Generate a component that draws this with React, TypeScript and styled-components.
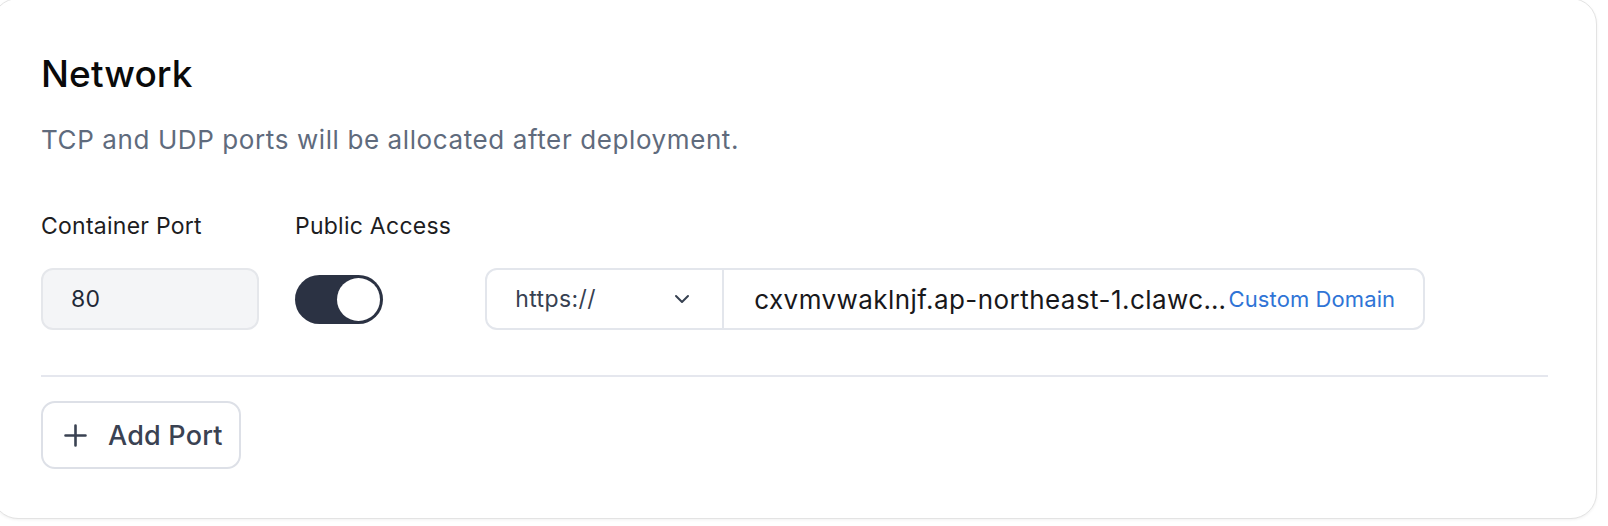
import React from "react";
import styled, { createGlobalStyle } from "styled-components";

const GlobalStyle = createGlobalStyle`
  html, body {
    margin: 0;
    padding: 0;
    background: #ffffff;
  }
  body {
    font-family: Inter, "Noto Sans", "Liberation Sans", sans-serif;
    -webkit-font-smoothing: antialiased;
  }
  * { box-sizing: border-box; }
`;

const Page = styled.div`
  width: 1608px;
  height: 526px;
  overflow: hidden;
  background: #ffffff;
`;

const Card = styled.section`
  margin: -2px 0 0 -8px;
  width: 1605px;
  background: #ffffff;
  border: 1px solid #e3e3e3;
  border-radius: 26px;
  box-shadow: 0 1px 3px rgba(0, 0, 0, 0.06);
  padding: 53px 48px 49px 48px;
`;

const Title = styled.h2`
  margin: 0;
  font-size: 37px;
  line-height: 44px;
  font-weight: 500;
  color: #0a0a0a;
  letter-spacing: 0.1px;
`;

const Description = styled.p`
  margin: 28px 0 0;
  font-size: 26px;
  line-height: 32px;
  font-weight: 400;
  color: #5f6b7d;
  letter-spacing: 0.6px;
`;

const PortRow = styled.div`
  margin-top: 56px;
  display: flex;
  align-items: flex-end;
  gap: 36px;
`;

const Field = styled.div`
  display: flex;
  flex-direction: column;
  gap: 28px;
`;

const Label = styled.span`
  font-size: 23px;
  line-height: 28px;
  font-weight: 400;
  color: #1d1d1f;
  letter-spacing: 0.25px;
`;

const PortInput = styled.div`
  width: 218px;
  height: 62px;
  display: flex;
  align-items: center;
  padding-left: 28px;
  background: #f4f5f7;
  border: 2px solid #e5e7eb;
  border-radius: 12px;
  font-size: 23px;
  color: #1f2937;
  letter-spacing: 0.3px;
`;

const ToggleSlot = styled.div`
  height: 62px;
  display: flex;
  align-items: center;
`;

const Toggle = styled.button<{ $on: boolean }>`
  width: 88px;
  height: 49px;
  padding: 3px;
  border: none;
  border-radius: 999px;
  background: ${(p) => (p.$on ? "#2b3243" : "#d1d5db")};
  display: flex;
  justify-content: ${(p) => (p.$on ? "flex-end" : "flex-start")};
  align-items: center;
  cursor: pointer;
`;

const Knob = styled.span`
  width: 43px;
  height: 43px;
  border-radius: 50%;
  background: #ffffff;
`;

const UrlGroup = styled.div`
  width: 940px;
  height: 62px;
  margin-left: -2px;
  display: flex;
  border: 2px solid #e3e6ec;
  border-radius: 12px;
  overflow: hidden;
  background: #ffffff;
`;

const SchemeSelect = styled.div`
  width: 237px;
  flex: none;
  display: flex;
  align-items: center;
  justify-content: space-between;
  padding: 0 28px;
  border-right: 2px solid #e3e6ec;
  font-size: 23px;
  letter-spacing: 0.4px;
  color: #374151;
`;

const DomainField = styled.div`
  flex: 1;
  min-width: 0;
  display: flex;
  align-items: center;
  padding: 0 28px 0 30px;
`;

const DomainText = styled.span`
  flex: 1 1 auto;
  min-width: 0;
  white-space: nowrap;
  overflow: hidden;
  text-overflow: ellipsis;
  font-size: 26px;
  letter-spacing: 0.45px;
  color: #18181b;
`;

const CustomDomain = styled.a`
  flex: none;
  font-size: 22px;
  letter-spacing: 0.1px;
  color: #2f74d6;
  text-decoration: none;
  cursor: pointer;
`;

const Divider = styled.hr`
  margin: 45px 0 0;
  border: none;
  height: 2px;
  background: #e5e7ee;
`;

const AddButton = styled.button`
  margin-top: 24px;
  height: 68px;
  display: inline-flex;
  align-items: center;
  gap: 21px;
  padding: 0 16px 0 21px;
  background: #ffffff;
  border: 2px solid #dde0e7;
  border-radius: 14px;
  font-family: inherit;
  font-size: 27px;
  font-weight: 500;
  letter-spacing: 0.2px;
  color: #3a4252;
  cursor: pointer;
`;

const Chevron = () => (
  <svg width="24" height="24" viewBox="0 0 24 24" fill="none" stroke="#374151" strokeWidth="2" strokeLinecap="round" strokeLinejoin="round">
    <path d="m6 9 6 6 6-6" />
  </svg>
);

const PlusIcon = () => (
  <svg width="23" height="23" viewBox="0 0 23 23" fill="none" stroke="#3a4252" strokeWidth="2.6" strokeLinecap="round">
    <path d="M1.5 11.5h20M11.5 1.5v20" />
  </svg>
);

export default function App() {
  return (
    <Page>
      <GlobalStyle />
      <Card>
        <Title>Network</Title>
        <Description>TCP and UDP ports will be allocated after deployment.</Description>
        <PortRow>
          <Field>
            <Label>Container Port</Label>
            <PortInput>80</PortInput>
          </Field>
          <Field>
            <Label>Public Access</Label>
            <ToggleSlot>
              <Toggle $on={true} aria-label="Public Access">
                <Knob />
              </Toggle>
            </ToggleSlot>
          </Field>
          <UrlGroup>
            <SchemeSelect>
              <span>https://</span>
              <Chevron />
            </SchemeSelect>
            <DomainField>
              <DomainText>cxvmvwaklnjf.ap-northeast-1.clawcloudrun.com</DomainText>
              <CustomDomain>Custom Domain</CustomDomain>
            </DomainField>
          </UrlGroup>
        </PortRow>
        <Divider />
        <AddButton>
          <PlusIcon />
          <span>Add Port</span>
        </AddButton>
      </Card>
    </Page>
  );
}
